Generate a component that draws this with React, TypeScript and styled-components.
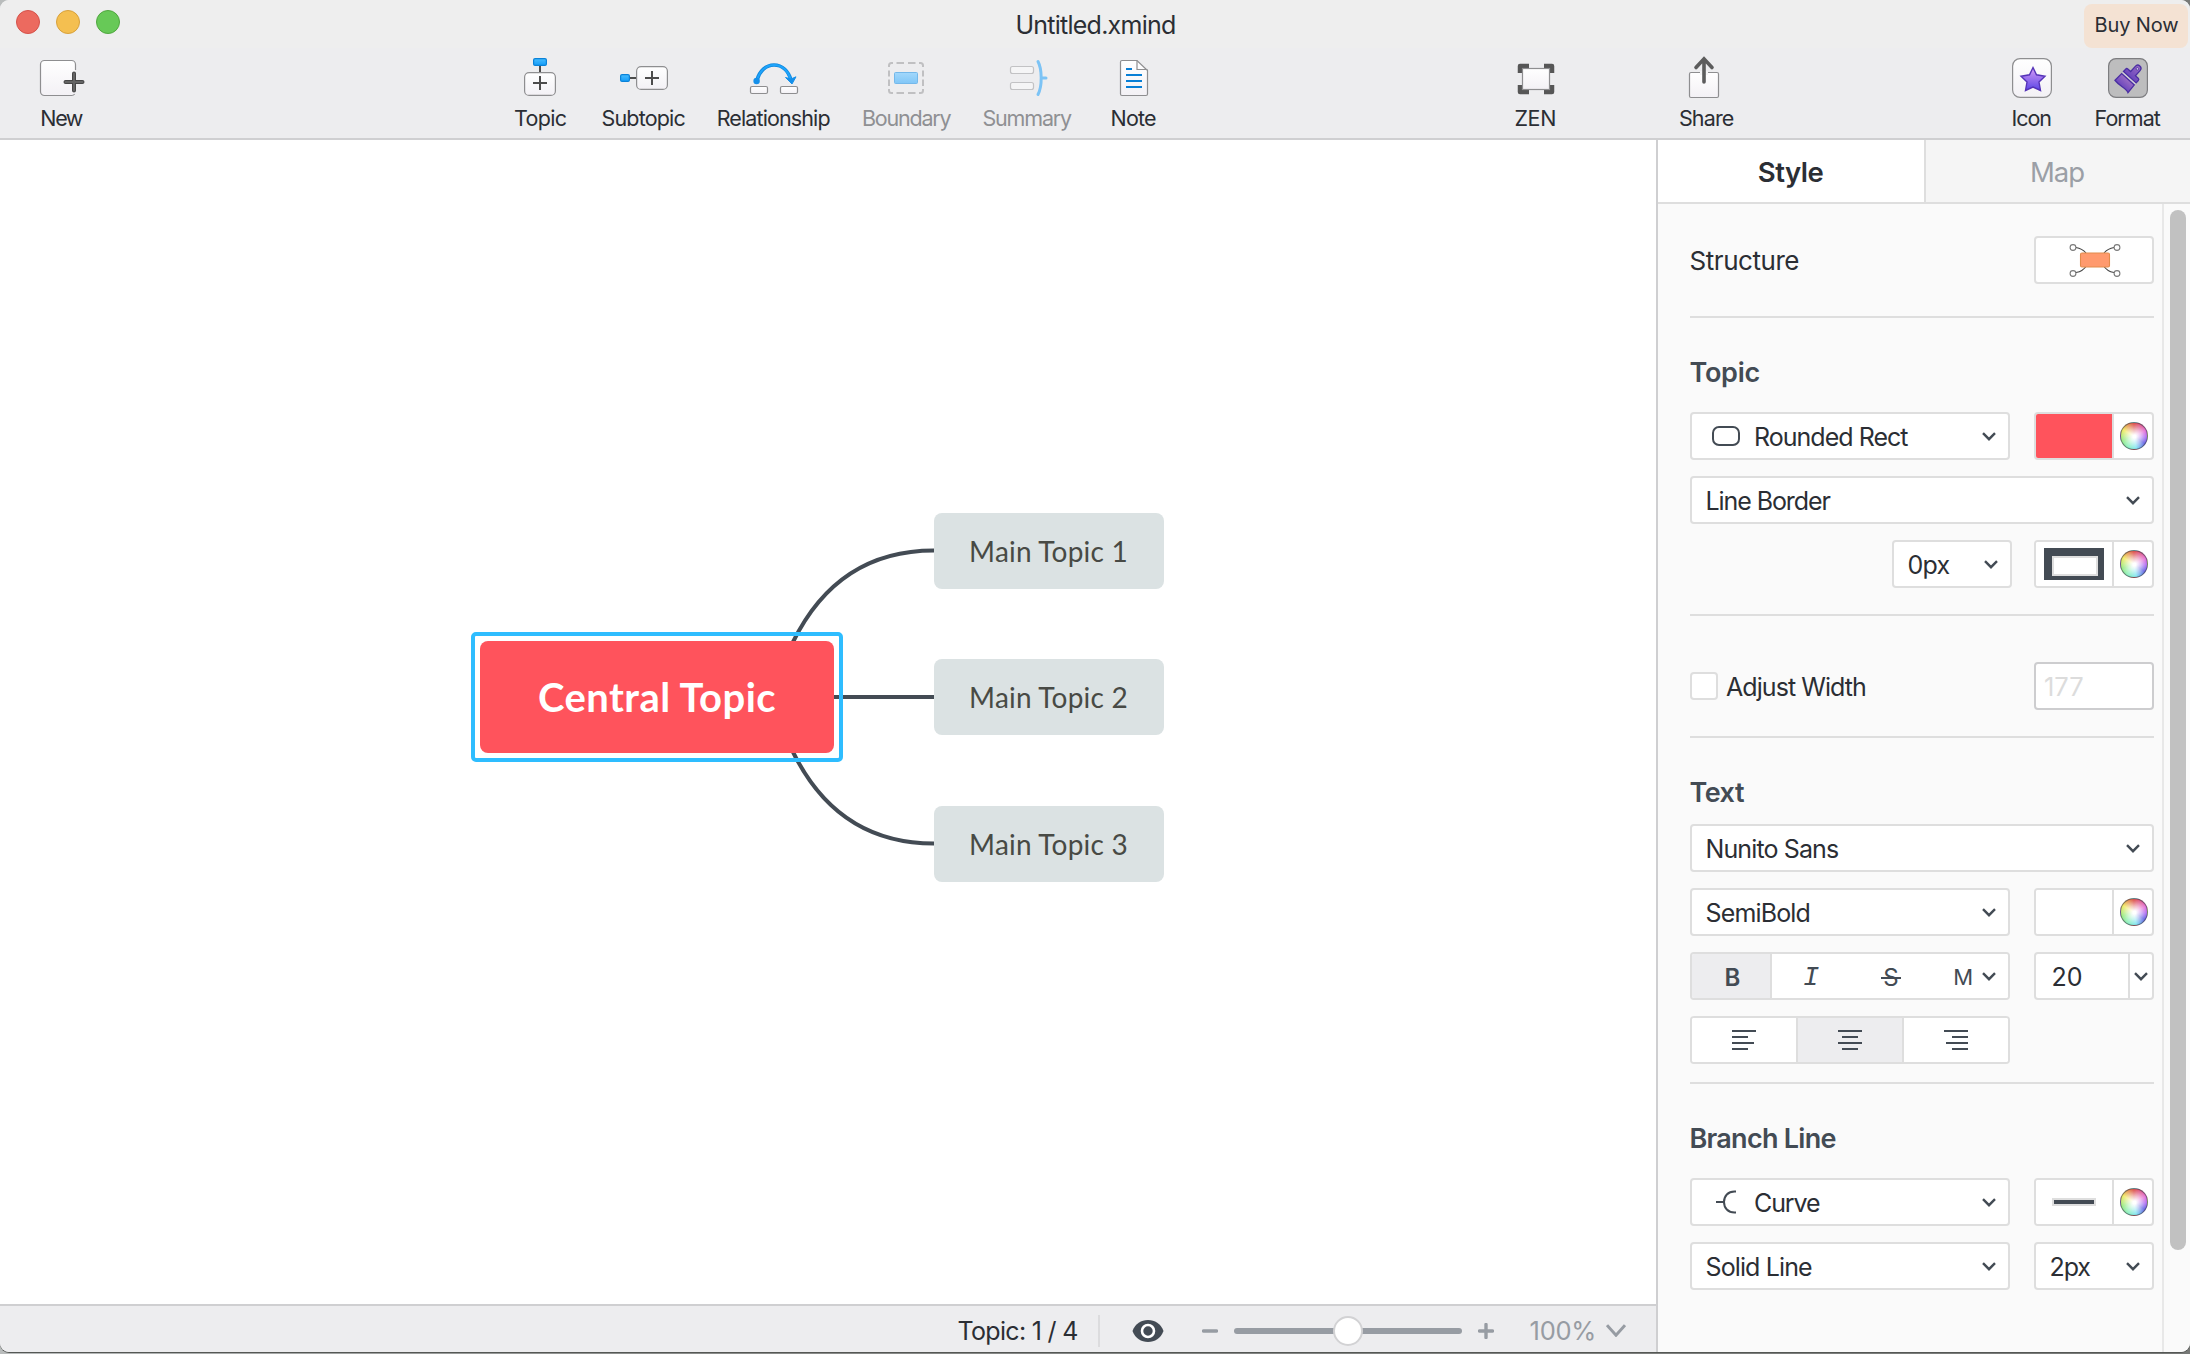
import React from "react";
import styled, { createGlobalStyle, css } from "styled-components";

const color = {
  ink: "#2b2e34",
  slate: "#434b54",
  muted: "#979ca3",
  line: "#dedede",
  edge: "#cfcfd1",
  chrome: "#ededef",
  blue: "#2ebdff",
  red: "#ff535c",
};

const GlobalStyle = createGlobalStyle`
  * { box-sizing: border-box; }
  body {
    margin: 0;
    background: linear-gradient(to right, #b9bcbc 0, #8b8d8b 30%, #777977 100%);
    font-family: Inter, "Liberation Sans", sans-serif;
    color: ${color.ink};
  }
`;

const Window = styled.div`
  width: 2190px;
  height: 1352px;
  margin-bottom: 2px;
  display: flex;
  flex-direction: column;
  overflow: hidden;
  border-radius: 9px;
  background: ${color.chrome};
  box-shadow: 0 1px 0 #555855;
`;

/* ---------- Title bar ---------- */

const TitleBar = styled.header`
  height: 48px;
  flex: none;
  display: grid;
  grid-template-columns: 1fr auto 1fr;
  align-items: center;
  background: #eeeeee;
`;

const TrafficLights = styled.div`
  display: flex;
  gap: 16px;
  padding: 0 0 4px 16px;
`;

const Light = styled.span<{ $fill: string; $ring: string }>`
  width: 24px;
  height: 24px;
  border-radius: 50%;
  background: ${(p) => p.$fill};
  border: 1px solid ${(p) => p.$ring};
`;

const Title = styled.div`
  font-size: 25px;
  letter-spacing: -0.76px;
  padding: 2px 0 0 1px;
`;

const BuyNow = styled.button`
  justify-self: end;
  align-self: end;
  width: 104px;
  height: 44px;
  margin-right: 2px;
  padding: 0 0 2px 1px;
  border: 0;
  border-radius: 8px;
  background: #f4e2d3;
  color: ${color.ink};
  font: 400 20px Inter, sans-serif;
  letter-spacing: -0.1px;
`;

/* ---------- Toolbar ---------- */

const Toolbar = styled.nav`
  height: 92px;
  flex: none;
  display: flex;
  align-items: flex-start;
  padding-top: 8px;
  border-bottom: 2px solid ${color.edge};
`;

const ToolButton = styled.div<{ $width: number; $before: number; $disabled?: boolean }>`
  width: ${(p) => p.$width}px;
  margin-left: ${(p) => p.$before}px;
  flex: none;
  display: flex;
  flex-direction: column;
  align-items: center;
  color: ${(p) => (p.$disabled ? "#8f9093" : color.ink)};
`;

const ToolGlyph = styled.svg`
  display: block;
  width: 100%;
  height: 44px;
  overflow: visible;
`;

const ToolLabel = styled.span<{ $tracking: number }>`
  margin-top: 4px;
  padding-right: 1.6px;
  font-size: 21.5px;
  line-height: 28px;
  white-space: nowrap;
  letter-spacing: ${(p) => p.$tracking}px;
`;

/* ---------- Body ---------- */

const Body = styled.div`
  flex: 1;
  min-height: 0;
  display: flex;
`;

const Workspace = styled.main`
  width: 1656px;
  flex: none;
  display: flex;
  flex-direction: column;
`;

const Canvas = styled.div`
  position: relative;
  flex: 1;
  background: #fff;
`;

const Branches = styled.svg`
  position: absolute;
  inset: 0;
  width: 100%;
  height: 100%;
`;

const Node = styled.div<{ $x: number; $y: number }>`
  position: absolute;
  left: ${(p) => p.$x}px;
  top: ${(p) => p.$y}px;
  display: flex;
  align-items: center;
  justify-content: center;
  border-radius: 8px;
  white-space: nowrap;
`;

const MainNode = styled(Node)`
  width: 230px;
  height: 76px;
  background: #dbe2e3;
  color: #484a45;
  font: 400 28px Lato, sans-serif;
  letter-spacing: 0.2px;
`;

const CentralNode = styled(Node)`
  width: 354px;
  height: 112px;
  background: ${color.red};
  color: #fff;
  font: 700 40px Lato, sans-serif;
  letter-spacing: 0.45px;
  &::after {
    content: "";
    position: absolute;
    inset: -9px;
    border: 4px solid ${color.blue};
    border-radius: 5px;
  }
`;

/* ---------- Status bar ---------- */

const StatusBar = styled.footer`
  height: 48px;
  flex: none;
  display: flex;
  align-items: center;
  justify-content: flex-end;
  padding: 3px 30px 0 0;
  border-top: 2px solid ${color.edge};
  background: ${color.chrome};
`;

const TopicCount = styled.span`
  font-size: 25px;
  letter-spacing: -0.7px;
`;

const StatusDivider = styled.span`
  width: 2px;
  height: 32px;
  margin: 0 32px 0 20px;
  background: #dcdcde;
`;

const ZoomTrack = styled.div`
  width: 228px;
  height: 6px;
  margin: 0 16px;
  display: flex;
  align-items: center;
  justify-content: center;
  border-radius: 3px;
  background: ${color.muted};
`;

const ZoomThumb = styled.span`
  width: 30px;
  height: 30px;
  flex: none;
  border: 2px solid #d2d2d4;
  border-radius: 50%;
  background: #fff;
`;

const StepGlyph = styled.svg`
  width: 16px;
  height: 16px;
  display: block;
`;

const EyeGlyph = styled.svg`
  width: 32px;
  height: 24px;
  margin-right: 38px;
`;

const ZoomValue = styled.span`
  margin: 0 10px 0 36px;
  color: ${color.muted};
  font-size: 25.5px;
  letter-spacing: -0.3px;
`;

/* ---------- Format panel ---------- */

const Panel = styled.aside`
  flex: 1;
  display: flex;
  flex-direction: column;
  border-left: 2px solid ${color.edge};
  background: #fafafa;
`;

const Tabs = styled.div`
  height: 64px;
  flex: none;
  display: flex;
  border-bottom: 2px solid ${color.line};
`;

const Tab = styled.div<{ $active?: boolean }>`
  display: flex;
  align-items: center;
  justify-content: center;
  padding-top: 1px;
  ${(p) =>
    p.$active
      ? css`
          width: 268px;
          padding-right: 1px;
          border-right: 2px solid ${color.line};
          background: #fff;
          font-weight: 600;
          font-size: 27.5px;
          letter-spacing: -0.5px;
        `
      : css`
          flex: 1;
          padding-right: 2px;
          background: #f5f5f5;
          color: #9b9fa6;
          font-size: 27.5px;
          letter-spacing: -1px;
        `}
`;

const PanelBody = styled.div`
  flex: 1;
  min-height: 0;
  display: flex;
`;

const Form = styled.div`
  width: 506px;
  flex: none;
  padding: 32px 8px 0 32px;
  border-right: 2px solid #e8e8e8;
`;

const ScrollThumb = styled.div`
  width: 16px;
  height: 1040px;
  margin: 6px 0 0 6px;
  border-radius: 8px;
  background: #c1c1c1;
`;

const Section = styled.section<{ $top?: number; $bottom?: number }>`
  display: flex;
  flex-direction: column;
  gap: 16px;
  padding: ${(p) => p.$top ?? 0}px 0 ${(p) => p.$bottom ?? 0}px;
  & + & {
    border-top: 2px solid ${color.line};
  }
`;

const Row = styled.div<{ $end?: boolean; $before?: number }>`
  height: 48px;
  margin-top: ${(p) => p.$before ?? 0}px;
  display: flex;
  align-items: center;
  justify-content: ${(p) => (p.$end ? "flex-end" : "space-between")};
  gap: 22px;
`;

const Heading = styled.h2<{ $tracking: number }>`
  margin: 0 0 -7px -0.5px;
  font-size: 27px;
  font-weight: 600;
  line-height: 40px;
  color: ${color.slate};
  letter-spacing: ${(p) => p.$tracking}px;
`;

const StructureLabel = styled.span`
  font-size: 26px;
  letter-spacing: -0.45px;
  margin-left: -0.5px;
`;

const Box = styled.div<{ $width: number }>`
  width: ${(p) => p.$width}px;
  height: 48px;
  flex: none;
  display: flex;
  align-items: center;
  overflow: hidden;
  border: 2px solid ${color.line};
  border-radius: 4px;
  background: #fff;
`;

const SelectBox = styled(Box)<{ $iconLeft?: number }>`
  padding: 0 12px 0 ${(p) => p.$iconLeft ?? 13.5}px;
`;

const SelectText = styled.span<{ $tracking: number }>`
  flex: 1;
  padding-top: 1px;
  font-size: 25px;
  white-space: nowrap;
  letter-spacing: ${(p) => p.$tracking}px;
`;

const SelectIcon = styled.svg<{ $after: number }>`
  flex: none;
  margin-right: ${(p) => p.$after}px;
`;

const CenterBox = styled(Box)`
  justify-content: center;
  padding-left: 1px;
`;

const Swatch = styled.div<{ $fill?: string }>`
  width: 78px;
  height: 44px;
  flex: none;
  display: flex;
  align-items: center;
  justify-content: center;
  border-right: 2px solid ${color.line};
  background: ${(p) => p.$fill ?? "#fff"};
`;

const BorderSample = styled.div`
  width: 60px;
  height: 32px;
  padding: 8px 6px 8px 8px;
  background: ${color.slate};
  &::before {
    content: "";
    display: block;
    height: 16px;
    border: 2px solid ${color.line};
    background: #fff;
  }
`;

const LineSample = styled.div`
  width: 44px;
  height: 8px;
  border: 2px solid ${color.line};
  background: ${color.slate};
`;

const Wheel = styled.span`
  width: 28px;
  height: 28px;
  margin: 0 auto 0 6px;
  border: 1px solid rgba(70, 70, 80, 0.65);
  border-radius: 50%;
  background: radial-gradient(circle at 52% 52%, #fff 8%, rgba(255, 255, 255, 0.62) 35%, rgba(255, 255, 255, 0) 74%),
    conic-gradient(#d8403c, #e05ad0 65deg, #a050f0 95deg, #4a48e0 125deg, #6ce0ee 170deg, #7ceeb4 210deg, #8ee878 250deg, #f0e858 300deg, #d8403c 360deg);
`;

const CheckLabel = styled.label`
  flex: 1;
  display: flex;
  align-items: center;
  gap: 8px;
  font-size: 25px;
  letter-spacing: -0.93px;
`;

const CheckText = styled.span`
  padding-top: 2px;
`;

const CheckBox = styled.span`
  width: 28px;
  height: 28px;
  border: 2px solid ${color.line};
  border-radius: 4px;
  background: #fff;
`;

const WidthInput = styled(Box)`
  padding: 1px 0 0 8px;
  border-color: #cdcdcf;
  color: #dcdcdc;
  font-size: 25.5px;
`;

const StyleCell = styled.div<{ $width?: number; $on?: boolean; $left?: boolean; $right?: boolean }>`
  ${(p) => (p.$width ? `width: ${p.$width}px;` : "flex: 1;")}
  height: 44px;
  display: flex;
  align-items: center;
  justify-content: center;
  color: ${color.slate};
  font-size: 24px;
  background: ${(p) => (p.$on ? color.chrome : "#fff")};
  border-left: ${(p) => (p.$left ? `2px solid ${color.line}` : "0")};
  border-right: ${(p) => (p.$right ? `2px solid ${color.line}` : "0")};
`;

const CaseCell = styled(StyleCell)`
  justify-content: flex-end;
  padding-right: 12px;
`;

const BoldMark = styled.span`
  padding: 2px 0 0 3px;
  font-size: 24px;
  font-weight: 600;
`;

const ItalicMark = styled.span`
  padding-top: 3px;
  font: italic 400 27px "Liberation Mono", monospace;
`;

const StrikeMark = styled.span`
  position: relative;
  margin-left: 2px;
  padding-top: 2px;
  font-size: 24px;
  &::after {
    content: "";
    position: absolute;
    left: -2px;
    right: -2px;
    top: 16px;
    height: 2px;
    background: ${color.slate};
  }
`;

const CaseMark = styled.span`
  padding-top: 2px;
  margin-right: 9px;
  font-size: 22px;
`;

const SizeCell = styled.div`
  width: 94px;
  height: 44px;
  padding: 8px 0 0 15.5px;
  border-right: 2px solid ${color.line};
  font-size: 25px;
  line-height: 30px;
`;

const SizeArrow = styled.div`
  flex: 1;
  display: flex;
  justify-content: center;
`;

const AlignGlyph = styled.div<{ $side: "flex-start" | "center" | "flex-end" }>`
  width: 24px;
  display: flex;
  flex-direction: column;
  align-items: ${(p) => p.$side};
  gap: 4px;
`;

const AlignLine = styled.span<{ $width: number }>`
  width: ${(p) => p.$width}px;
  height: 2px;
  background: ${color.slate};
`;

/* ---------- Small parts ---------- */

const ChevronSvg = styled.svg`
  flex: none;
  fill: none;
`;

const Chevron = ({ w = 14, h = 9, stroke = color.slate, sw = 2.4 }: { w?: number; h?: number; stroke?: string; sw?: number }) => (
  <ChevronSvg width={w} height={h} viewBox={`0 0 ${w} ${h}`} stroke={stroke} strokeWidth={sw}>
    <path d={`M1 1.2 L${w / 2} ${h - 1.8} L${w - 1} 1.2`} />
  </ChevronSvg>
);

type SelectProps = { width: number; text: string; tracking: number; icon?: React.ReactNode; iconLeft?: number };
const Select = ({ width, text, tracking, icon, iconLeft }: SelectProps) => (
  <SelectBox $width={width} $iconLeft={iconLeft}>
    {icon}
    <SelectText $tracking={tracking}>{text}</SelectText>
    <Chevron />
  </SelectBox>
);

const ColorPicker = ({ fill, children }: { fill?: string; children?: React.ReactNode }) => (
  <Box $width={120}>
    <Swatch $fill={fill}>{children}</Swatch>
    <Wheel />
  </Box>
);

const Align = ({ side, widths }: { side: "flex-start" | "center" | "flex-end"; widths: number[] }) => (
  <AlignGlyph $side={side}>
    {widths.map((w, i) => (
      <AlignLine key={i} $width={w} />
    ))}
  </AlignGlyph>
);

const paper = { fill: "url(#paper)", stroke: "#8e8e90", strokeWidth: 1.2 };
const bluePart = { fill: "url(#sky)", stroke: "#0a82d8", strokeWidth: 1.2 };

/* Toolbar glyphs share one coordinate system: the x axis runs along the whole toolbar. */
type Tool = { label: string; start: number; width: number; tracking: number; disabled?: boolean; glyph: React.ReactNode };
const tools: Tool[] = [
  {
    label: "New", start: 38, width: 48, tracking: -1.4,
    glyph: (
      <>
        <path d="M75.5 70 V64.5 a4 4 0 0 0 -4 -4 H44.5 a4 4 0 0 0 -4 4 V91.5 a4 4 0 0 0 4 4 H71.5 a4 4 0 0 0 3.5 -1.5 V70Z" fill="url(#paper)" />
        <path d="M75.5 70 V64.5 a4 4 0 0 0 -4 -4 H44.5 a4 4 0 0 0 -4 4 V91.5 a4 4 0 0 0 4 4 H71.5 a4 4 0 0 0 3.2 -1.5" fill="none" stroke="#8e8e90" strokeWidth="1.2" />
        <path d="M74 73.5 V90.5 M65.5 82 H82.5" stroke="#464646" strokeWidth="4" strokeLinecap="round" />
        <path d="M74 73.5 V90.5 M65.5 82 H82.5" stroke="#646464" strokeWidth="2" strokeLinecap="round" />
      </>
    ),
  },
  {
    label: "Topic", start: 513, width: 56, tracking: -0.68,
    glyph: (
      <>
        <path d="M540 65 V72" stroke="#4c4c4c" strokeWidth="2" />
        <rect x="533.6" y="58.6" width="12.8" height="6.8" rx="1.5" {...bluePart} />
        <rect x="524.6" y="72.6" width="30.8" height="22.8" rx="4.5" {...paper} />
        <path d="M540 76 V90 M533 83 H547" stroke="#4c4c4c" strokeWidth="2" />
      </>
    ),
  },
  {
    label: "Subtopic", start: 600, width: 88, tracking: -0.84,
    glyph: (
      <>
        <path d="M629 78 H637" stroke="#4c4c4c" strokeWidth="2" />
        <rect x="620.6" y="74.6" width="8.8" height="6.8" rx="1.5" {...bluePart} />
        <rect x="636.6" y="66.6" width="30.8" height="22.8" rx="4.5" {...paper} />
        <path d="M652 71 V85 M645 78 H659" stroke="#4c4c4c" strokeWidth="2" />
      </>
    ),
  },
  {
    label: "Relationship", start: 716, width: 116, tracking: -0.88,
    glyph: (
      <>
        <path d="M757 80 C759.5 71 766 65 774 65 C782.5 65 788.5 71.5 791 80" fill="none" stroke="#0f86dc" strokeWidth="3.6" />
        <path d="M757 80 C759.5 71 766 65 774 65 C782.5 65 788.5 71.5 791 80" fill="none" stroke="#1ea4fb" strokeWidth="2" />
        <circle cx="756.6" cy="81" r="3.2" fill="#1590ea" />
        <path d="M785.5 77.5 L791 79 L796 76.8 L792 84 Z" fill="#1590ea" stroke="#1590ea" strokeLinejoin="round" />
        <rect x="750.5" y="86.5" width="17" height="7" rx="1.5" {...paper} />
        <rect x="780.5" y="86.5" width="17" height="7" rx="1.5" {...paper} />
      </>
    ),
  },
  {
    label: "Boundary", start: 860, width: 94, tracking: -1.2, disabled: true,
    glyph: (
      <>
        <path d="M889 67 V65.5 a2.5 2.5 0 0 1 2.5 -2.5 H893 M896.5 63 H904 M908 63 H915.5 M919 63 H920.5 a2.5 2.5 0 0 1 2.5 2.5 V67 M923 70.5 V76.5 M923 79.5 V86 M923 89 V90.5 a2.5 2.5 0 0 1 -2.5 2.5 H919 M915.5 93 H908 M904 93 H896.5 M893 93 H891.5 a2.5 2.5 0 0 1 -2.5 -2.5 V89 M889 86 V79.5 M889 76.5 V70.5" fill="none" stroke="#c0c0c2" strokeWidth="2" />
        <rect x="894.5" y="72.5" width="23" height="11" rx="1" fill="url(#paleSky)" stroke="#74b8ea" />
      </>
    ),
  },
  {
    label: "Summary", start: 981, width: 93, tracking: -1.18, disabled: true,
    glyph: (
      <>
        <rect x="1010.5" y="66.5" width="23" height="7" rx="2" fill="#f5f5f6" stroke="#c2c2c4" strokeWidth="1.2" />
        <rect x="1010.5" y="82.5" width="23" height="7" rx="2" fill="#f5f5f6" stroke="#c2c2c4" strokeWidth="1.2" />
        <path d="M1038 61.5 C1042 69 1042.5 86 1038 94.5 M1041.5 78 H1046" fill="none" stroke="#7cc3f5" strokeWidth="3" strokeLinecap="round" />
      </>
    ),
  },
  {
    label: "Note", start: 1109, width: 50, tracking: -0.8,
    glyph: (
      <>
        <path d="M1137 60.5 H1122 a1.5 1.5 0 0 0 -1.5 1.5 V94 a1.5 1.5 0 0 0 1.5 1.5 H1146 a1.5 1.5 0 0 0 1.5 -1.5 V70.5 Z" {...paper} />
        <path d="M1137 60.5 V69.5 H1147.5" fill="none" stroke="#8e8e90" strokeWidth="1.2" />
        <path d="M1126 69 H1132 M1126 75 H1142 M1126 81 H1142 M1126 87 H1142" stroke="#087fd6" strokeWidth="2" />
      </>
    ),
  },
  {
    label: "ZEN", start: 1513, width: 46, tracking: -0.33,
    glyph: (
      <>
        <path d="M1520 73 V66 H1529 M1544 66 H1552 V73 M1552 85 V92 H1544 M1529 92 H1520 V85" fill="none" stroke="#565656" strokeWidth="4.5" strokeLinejoin="round" />
        <rect x="1522.5" y="68.5" width="27" height="21" {...paper} />
      </>
    ),
  },
  {
    label: "Share", start: 1677, width: 60, tracking: -0.85,
    glyph: (
      <>
        <rect x="1689.5" y="72.5" width="29" height="25" rx="1.5" {...paper} />
        <rect x="1700" y="71" width="8" height="4" fill="#f4f4f5" />
        <path d="M1704 60 V82 M1696 67.5 L1704 58.8 L1712 67.5" fill="none" stroke="#5c5c5c" strokeWidth="3.6" strokeLinecap="round" />
      </>
    ),
  },
  {
    label: "Icon", start: 2010, width: 44, tracking: -1,
    glyph: (
      <>
        <rect x="2012.6" y="58.6" width="38.8" height="38.8" rx="7.5" {...paper} />
        <path d="M2033 67.5 L2036.5 74.8 L2045 76.2 L2039 82 L2040.5 90.5 L2033 87 L2025.5 90.5 L2027 82 L2021 76.2 L2029.5 74.8 Z" fill="url(#violet)" stroke="#5533b8" strokeWidth="1.4" />
      </>
    ),
  },
  {
    label: "Format", start: 2092, width: 72, tracking: -0.95,
    glyph: (
      <>
        <rect x="2108.6" y="58.6" width="38.8" height="38.8" rx="7.5" fill="#bdbdbe" stroke="#7d7d80" strokeWidth="1.2" />
        <g transform="translate(2130 77) rotate(42)" fill="url(#violetDark)" stroke="#4a2fa2" strokeWidth="1.3">
          <path d="M-8.5 3 H8.5 L9 13 C5 10.5 -1 14 -9 12.5 Z" />
          <path d="M-8.5 0.3 V-3 Q-8.5 -4.5 -7 -4.5 H-3.2 V-11.5 a3.2 3.2 0 0 1 6.4 0 V-4.5 H7 Q8.5 -4.5 8.5 -3 V0.3 Z" />
          <path d="M-8.5 1.65 H8.5" stroke="#d4cfe0" strokeWidth="1" />
          <circle cx="0" cy="-11" r="1.3" fill="#cfc9dc" strokeWidth="0.8" />
        </g>
      </>
    ),
  },
];

const PaintDefs = styled.svg`
  position: absolute;
  width: 0;
  height: 0;
`;

const Fade = ({ id, from, to }: { id: string; from: string; to: string }) => (
  <linearGradient id={id} x1="0" y1="0" x2="0" y2="1">
    <stop offset="0" stopColor={from} />
    <stop offset="1" stopColor={to} />
  </linearGradient>
);

const GlyphPaints = () => (
  <PaintDefs>
    <defs>
      <Fade id="paper" from="#ffffff" to="#f3f1f5" />
      <Fade id="sky" from="#46bcff" to="#149cf8" />
      <Fade id="paleSky" from="#a3d8fb" to="#80c6f7" />
      <Fade id="violet" from="#d79cf6" to="#5a45e6" />
      <Fade id="violetDark" from="#9a6cc4" to="#6a46bc" />
    </defs>
  </PaintDefs>
);

const mainTopics = [
  { text: "Main Topic 1", y: 372.5 },
  { text: "Main Topic 2", y: 519 },
  { text: "Main Topic 3", y: 665.5 },
];

export default function App() {
  return (
    <>
      <GlobalStyle />
      <GlyphPaints />
      <Window>
        <TitleBar>
          <TrafficLights>
            <Light $fill="#ec6a5f" $ring="#d5524a" />
            <Light $fill="#f4bf50" $ring="#d8a13b" />
            <Light $fill="#67c957" $ring="#50a73f" />
          </TrafficLights>
          <Title>Untitled.xmind</Title>
          <BuyNow>Buy Now</BuyNow>
        </TitleBar>

        <Toolbar>
          {tools.map((t, i) => {
            const prev = tools[i - 1];
            return (
              <ToolButton key={t.label} $width={t.width} $before={t.start - (prev ? prev.start + prev.width : 0)} $disabled={t.disabled}>
                <ToolGlyph viewBox={`${t.start} 56 ${t.width} 44`}>{t.glyph}</ToolGlyph>
                <ToolLabel $tracking={t.tracking}>{t.label}</ToolLabel>
              </ToolButton>
            );
          })}
        </Toolbar>

        <Body>
          <Workspace>
            <Canvas>
              <Branches viewBox="0 0 1656 1164" fill="none" stroke={color.slate} strokeWidth="4">
                <path d="M793 502 Q838 410.5 934 410.5" />
                <path d="M830 557 H934" />
                <path d="M793 612 Q838 703.5 934 703.5" />
              </Branches>
              {mainTopics.map((t) => (
                <MainNode key={t.text} $x={933.5} $y={t.y}>
                  {t.text}
                </MainNode>
              ))}
              <CentralNode $x={480} $y={501}>
                Central Topic
              </CentralNode>
            </Canvas>
            <StatusBar>
              <TopicCount>Topic: 1 / 4</TopicCount>
              <StatusDivider />
              <EyeGlyph viewBox="0 0 32 24">
                <path d="M0.5 12 C3.5 4.5 9 1 16 1 S28.5 4.5 31.5 12 C28.5 19.5 23 23 16 23 S3.5 19.5 0.5 12 Z" fill={color.slate} />
                <circle cx="16" cy="12" r="6" fill={color.slate} stroke="#fff" strokeWidth="2.6" />
              </EyeGlyph>
              <StepGlyph viewBox="0 0 16 16">
                <path d="M1.5 8 H14.5" stroke={color.muted} strokeWidth="3.4" strokeLinecap="round" />
              </StepGlyph>
              <ZoomTrack>
                <ZoomThumb />
              </ZoomTrack>
              <StepGlyph viewBox="0 0 16 16">
                <path d="M1.5 8 H14.5 M8 1.5 V14.5" stroke={color.muted} strokeWidth="3.4" strokeLinecap="round" />
              </StepGlyph>
              <ZoomValue>100%</ZoomValue>
              <Chevron w={20} h={13} stroke={color.muted} sw={3} />
            </StatusBar>
          </Workspace>

          <Panel>
            <Tabs>
              <Tab $active>Style</Tab>
              <Tab>Map</Tab>
            </Tabs>
            <PanelBody>
              <Form>
                <Section $bottom={32}>
                  <Row>
                    <StructureLabel>Structure</StructureLabel>
                    <CenterBox $width={120}>
                      <svg width="52" height="34" viewBox="0 0 52 34" fill="none" stroke="#7a7a7a" strokeWidth="1.1">
                        <path d="M7 4.5 Q13 5.5 17 10 M45 4.500 Q39 5.5 35 10 M7 29.5 Q14 28.5 18 22 M45 29.5 Q38 28.5 34 22" stroke="#444" />
                        <circle cx="4" cy="4.5" r="2.9" fill="#fff" />
                        <circle cx="48" cy="4.5" r="2.9" fill="#fff" />
                        <circle cx="4" cy="30.5" r="2.9" fill="#fff" />
                        <circle cx="48" cy="30.5" r="2.9" fill="#fff" />
                        <rect x="11.5" y="10" width="29" height="14" rx="1.5" fill="#ff9a6e" stroke="#e28b4c" />
                      </svg>
                    </CenterBox>
                  </Row>
                </Section>

                <Section $top={35} $bottom={26}>
                  <Heading $tracking={-0.27}>Topic</Heading>
                  <Row $before={10}>
                    <Select
                      width={320}
                      text="Rounded Rect"
                      tracking={-0.98}
                      iconLeft={19}
                      icon={
                        <SelectIcon $after={13} width="30" height="22" viewBox="0 0 30 22">
                          <rect x="2" y="2" width="26" height="18" rx="6" fill="none" stroke={color.slate} strokeWidth="2" />
                        </SelectIcon>
                      }
                    />
                    <ColorPicker fill={color.red} />
                  </Row>
                  <Row>
                    <Select width={464} text="Line Border" tracking={-1.08} />
                  </Row>
                  <Row $end>
                    <Select width={120} text="0px" tracking={-0.75} />
                    <ColorPicker>
                      <BorderSample />
                    </ColorPicker>
                  </Row>
                </Section>

                <Section $top={46} $bottom={26}>
                  <Row>
                    <CheckLabel>
                      <CheckBox />
                      <CheckText>Adjust Width</CheckText>
                    </CheckLabel>
                    <WidthInput $width={120}>177</WidthInput>
                  </Row>
                </Section>

                <Section $top={35} $bottom={18}>
                  <Heading $tracking={-0.5}>Text</Heading>
                  <Row $before={2}>
                    <Select width={464} text="Nunito Sans" tracking={-0.88} />
                  </Row>
                  <Row>
                    <Select width={320} text="SemiBold" tracking={-0.85} />
                    <ColorPicker />
                  </Row>
                  <Row>
                    <Box $width={320}>
                      <StyleCell $width={80} $on $right>
                        <BoldMark>B</BoldMark>
                      </StyleCell>
                      <StyleCell $width={78}>
                        <ItalicMark>I</ItalicMark>
                      </StyleCell>
                      <StyleCell $width={80}>
                        <StrikeMark>S</StrikeMark>
                      </StyleCell>
                      <CaseCell>
                        <CaseMark>M</CaseMark>
                        <Chevron />
                      </CaseCell>
                    </Box>
                    <Box $width={120}>
                      <SizeCell>20</SizeCell>
                      <SizeArrow>
                        <Chevron />
                      </SizeArrow>
                    </Box>
                  </Row>
                  <Row>
                    <Box $width={320}>
                      <StyleCell>
                        <Align side="flex-start" widths={[24, 16, 22, 16]} />
                      </StyleCell>
                      <StyleCell $width={108} $on $left $right>
                        <Align side="center" widths={[24, 16, 24, 16]} />
                      </StyleCell>
                      <StyleCell>
                        <Align side="flex-end" widths={[24, 16, 22, 16]} />
                      </StyleCell>
                    </Box>
                  </Row>
                </Section>

                <Section $top={35}>
                  <Heading $tracking={-0.72}>Branch Line</Heading>
                  <Row $before={10}>
                    <Select
                      width={320}
                      text="Curve"
                      tracking={-1.1}
                      iconLeft={24}
                      icon={
                        <SelectIcon $after={17} width="21" height="24" viewBox="0 0 21 24" fill="none" stroke={color.slate} strokeWidth="2">
                          <path d="M0 12 H8 M20 1.5 H18.5 C12 1.5 8 6 8 12 S12 22.5 18.5 22.5 H20" />
                        </SelectIcon>
                      }
                    />
                    <ColorPicker>
                      <LineSample />
                    </ColorPicker>
                  </Row>
                  <Row>
                    <Select width={320} text="Solid Line" tracking={-0.88} />
                    <Select width={120} text="2px" tracking={-1.1} />
                  </Row>
                </Section>
              </Form>
              <ScrollThumb />
            </PanelBody>
          </Panel>
        </Body>
      </Window>
    </>
  );
}
